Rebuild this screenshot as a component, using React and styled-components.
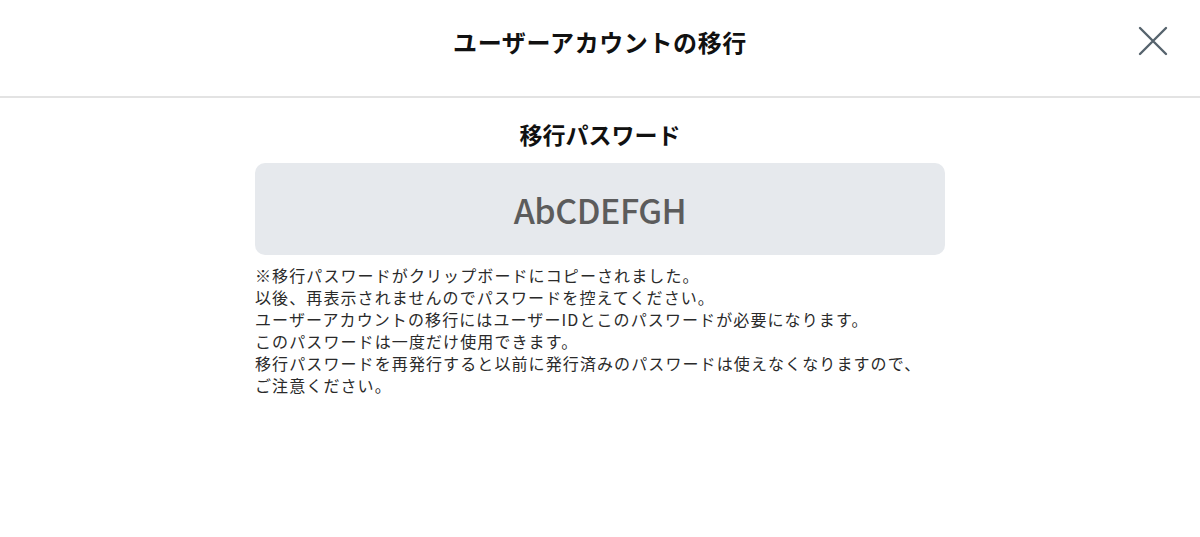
import styled, {createGlobalStyle} from 'styled-components';

const GlobalStyle = createGlobalStyle`
    html, body {
        margin: 0;
        padding: 0;
        background: #ffffff;
        font-family: "Noto Sans CJK JP", "Noto Sans", sans-serif;
        color: #222;
    }
`;

const notes = [
    '※移行パスワードがクリップボードにコピーされました。',
    '以後、再表示されませんのでパスワードを控えてください。',
    'ユーザーアカウントの移行にはユーザーIDとこのパスワードが必要になります。',
    'このパスワードは一度だけ使用できます。',
    '移行パスワードを再発行すると以前に発行済みのパスワードは使えなくなりますので、',
    'ご注意ください。',
];

export default function App() {
    return (
        <Page>
            <GlobalStyle />
            <Header>
                <HeaderTitle>ユーザーアカウントの移行</HeaderTitle>
                <CloseButton aria-label='close'>
                    <svg width='30' height='30' viewBox='0 0 30 30'>
                        <path
                            d='M2 2 L28 28 M28 2 L2 28'
                            stroke='#56636d'
                            strokeWidth='2.4'
                            strokeLinecap='round'
                        />
                    </svg>
                </CloseButton>
            </Header>

            <Body>
                <SectionTitle>移行パスワード</SectionTitle>
                <PasswordBox>AbCDEFGH</PasswordBox>
                <Notes>
                    {notes.map((line) => (
                        <Line key={line}>{line}</Line>
                    ))}
                </Notes>
            </Body>
        </Page>
    );
}

const Page = styled.div`
    width: 1200px;
    min-height: 537px;
`;

const Header = styled.header`
    position: relative;
    height: 96px;
    display: flex;
    align-items: center;
    justify-content: center;
    border-bottom: 2px solid #e3e3e3;
`;

const HeaderTitle = styled.h1`
    margin: 0 0 14px;
    font-size: 24px;
    font-weight: 700;
    letter-spacing: 0.6px;
    color: #111;
`;

const CloseButton = styled.button`
    position: absolute;
    right: 32px;
    top: 26px;
    padding: 0;
    border: none;
    background: none;
    display: flex;
    cursor: pointer;
`;

const Body = styled.main`
    width: 690px;
    margin: 0 auto;
    display: flex;
    flex-direction: column;
    align-items: center;
    padding-top: 20px;
`;

const SectionTitle = styled.h2`
    margin: 0 0 13px;
    font-size: 23px;
    font-weight: 700;
    line-height: 32px;
    color: #111;
`;

const PasswordBox = styled.div`
    width: 100%;
    height: 92px;
    border-radius: 10px;
    background: #e6e9ed;
    display: flex;
    align-items: center;
    justify-content: center;
    font-size: 34px;
    font-weight: 500;
    color: #5c5c5c;
    letter-spacing: -0.5px;
`;

const Notes = styled.div`
    width: 100%;
    margin-top: 9px;
    display: flex;
    flex-direction: column;
`;

const Line = styled.p`
    margin: 0;
    height: 22px;
    font-size: 16px;
    line-height: 22px;
    letter-spacing: 1.1px;
    color: #2a2a2a;
    white-space: nowrap;
`;
